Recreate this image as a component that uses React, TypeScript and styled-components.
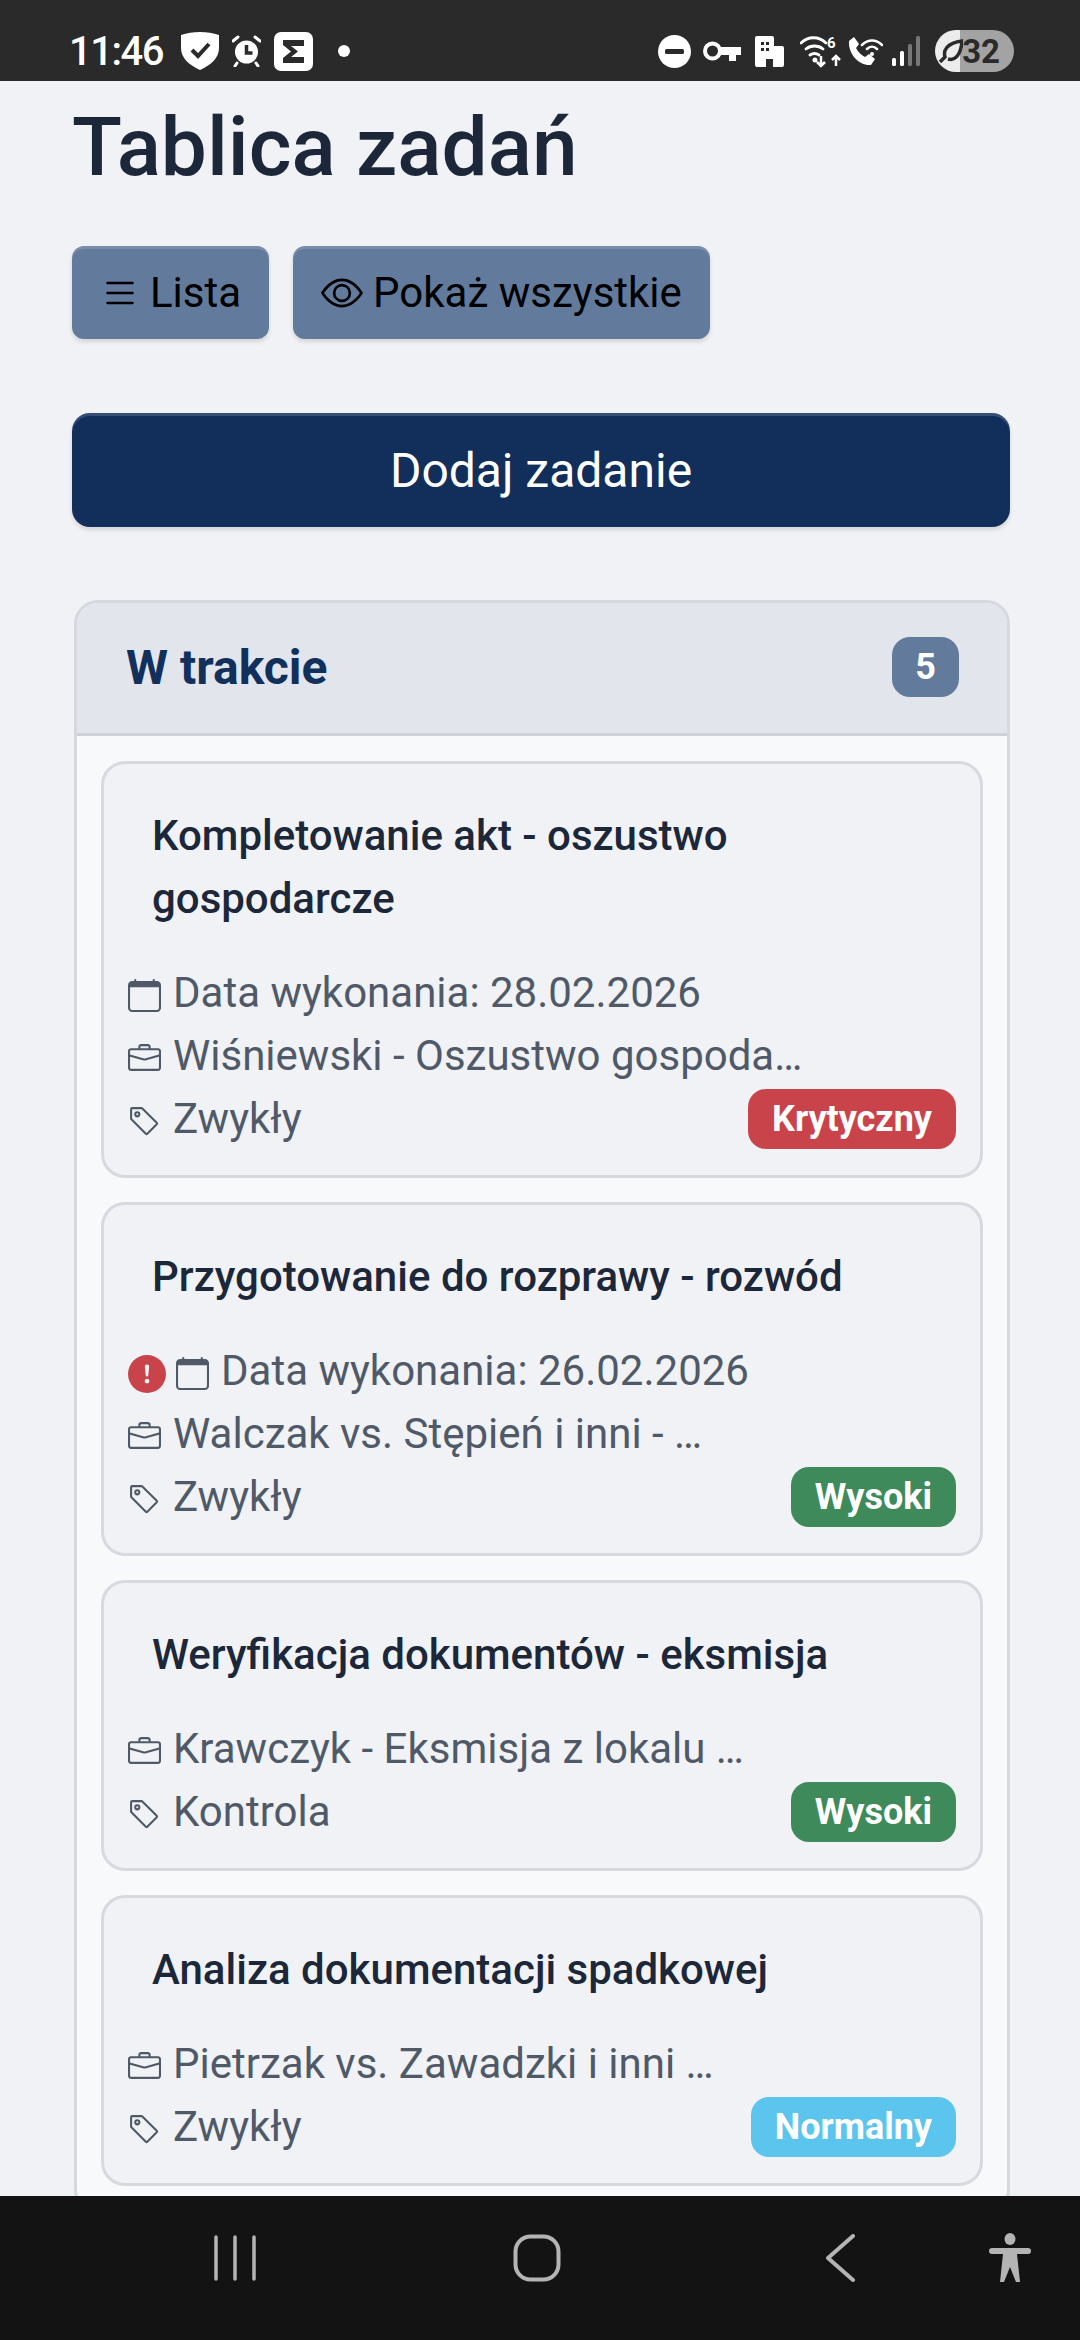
import styled, { createGlobalStyle } from "styled-components";
import {
  BsBriefcase,
  BsCalendar,
  BsExclamationCircleFill,
  BsEye,
  BsList,
  BsTag,
} from "react-icons/bs";

type Priority = "critical" | "high" | "normal";

type Task = {
  title: string[];
  date?: string;
  overdue?: boolean;
  matter: string;
  type: string;
  priority: Priority;
  label: string;
};

const tasks: Task[] = [
  {
    title: ["Kompletowanie akt - oszustwo", "gospodarcze"],
    date: "28.02.2026",
    matter: "Wiśniewski - Oszustwo gospoda…",
    type: "Zwykły",
    priority: "critical",
    label: "Krytyczny",
  },
  {
    title: ["Przygotowanie do rozprawy - rozwód"],
    date: "26.02.2026",
    overdue: true,
    matter: "Walczak vs. Stępień i inni - …",
    type: "Zwykły",
    priority: "high",
    label: "Wysoki",
  },
  {
    title: ["Weryfikacja dokumentów - eksmisja"],
    matter: "Krawczyk - Eksmisja z lokalu …",
    type: "Kontrola",
    priority: "high",
    label: "Wysoki",
  },
  {
    title: ["Analiza dokumentacji spadkowej"],
    matter: "Pietrzak vs. Zawadzki i inni …",
    type: "Zwykły",
    priority: "normal",
    label: "Normalny",
  },
];

const priorityColors: Record<Priority, string> = {
  critical: "#c9434b",
  high: "#3f8a5a",
  normal: "#5cc5ee",
};

export default function App() {
  return (
    <>
      <GlobalStyle />
      <Screen>
        <StatusBar>
          <StatusGroup>
            <Clock>11:46</Clock>
            <StatusIcon $gap={19} width="38" height="38" viewBox="0 0 38 38">
              <path d="M19 0c7 0 13 1 19 3v13c0 10-8 17-19 22C8 33 0 26 0 16V3c6-2 12-3 19-3z" fill="#fff" />
              <path d="M11 18l6 6 11-12" fill="none" stroke="#2a2a2a" strokeWidth="4" />
            </StatusIcon>
            <StatusIcon $gap={13} width="29" height="32" viewBox="0 0 29 32">
              <circle cx="14.5" cy="17" r="11.5" fill="#fff" />
              <path d="M14.5 10v8h6" fill="none" stroke="#2a2a2a" strokeWidth="3.5" />
              <path d="M1 6l5-4M28 6l-5-4M5 28l-2 3M24 28l2 3" stroke="#fff" strokeWidth="3" strokeLinecap="round" />
            </StatusIcon>
            <StatusIcon $gap={13} width="39" height="39" viewBox="0 0 39 39">
              <rect width="39" height="39" rx="7" fill="#fff" />
              <path d="M9 8h21v6H17l7 5.5-7 5.500h13v6H9v-5l8-6.500-8-6.500z" fill="#2a2a2a" />
            </StatusIcon>
            <StatusDot />
          </StatusGroup>
          <StatusGroup>
            <StatusIcon width="33" height="33" viewBox="0 0 33 33">
              <circle cx="16.500" cy="16.500" r="16.500" fill="#fff" />
              <rect x="7" y="14" width="19" height="5" rx="1.500" fill="#2a2a2a" />
            </StatusIcon>
            <StatusIcon $gap={12} width="38" height="21" viewBox="0 0 38 21">
              <circle cx="9.500" cy="10" r="7.500" fill="none" stroke="#fff" strokeWidth="4" />
              <path d="M17 6h21v8h-5v6h-7v-6h-9z" fill="#fff" />
            </StatusIcon>
            <StatusIcon $gap={14} width="29" height="31" viewBox="0 0 29 31">
              <path d="M2 0h15a2 2 0 0 1 2 2v8h8a2 2 0 0 1 2 2v17a2 2 0 0 1-2 2H18v-8h-7v8H2a2 2 0 0 1-2-2V2a2 2 0 0 1 2-2z" fill="#fff" />
              <path d="M6 6h3v3H6zM11 6h3v3h-3zM6 12h3v3H6zM11 12h3v3h-3z" fill="#2a2a2a" />
            </StatusIcon>
            <StatusIcon $gap={16} width="43" height="33" viewBox="0 0 43 33">
              <path d="M1 8c7-7 18-7 25 0M6 14c5-4 12-4 17 0M10 20c3-2 6-2 9 0" fill="none" stroke="#fff" strokeWidth="2.800" strokeLinecap="round" />
              <circle cx="15" cy="25" r="2.500" fill="#fff" />
              <path d="M21 21v10M17 27l4 4 4-4M36 31V21M32 25l4-4 4 4" fill="none" stroke="#fff" strokeWidth="2.500" />
              <text x="27" y="13" fill="#fff" fontFamily="Roboto, sans-serif" fontSize="15" fontWeight="700">6</text>
            </StatusIcon>
            <StatusIcon $gap={5} width="35" height="29" viewBox="0 0 35 29">
              <path d="M6 0l5 7-3 4c2 4 5 7 9 9l4-3 6 5-4 6C11 29 0 17 1 4z" fill="#fff" />
              <path d="M14 8c6-6 14-6 20 0M19 12c3-3 7-3 10 0" fill="none" stroke="#fff" strokeWidth="2.500" strokeLinecap="round" />
              <circle cx="24" cy="17" r="2" fill="#fff" />
            </StatusIcon>
            <StatusIcon $gap={9} width="28" height="30" viewBox="0 0 28 30">
              <rect x="0" y="22" width="4" height="8" rx="1.500" fill="#fff" />
              <rect x="8" y="15" width="4" height="15" rx="1.500" fill="#fff" />
              <rect x="16" y="8" width="4" height="22" rx="1.500" fill="#777" />
              <rect x="24" y="0" width="4" height="30" rx="1.500" fill="#777" />
            </StatusIcon>
            <Battery>
              <BatteryLeaf width="24" height="24" viewBox="0 0 24 24">
                <path d="M1 23c2-2 4-4 5-5-2-7 2-14 17-16-1 14-7 20-14 18" fill="none" stroke="#2a2a2a" strokeWidth="3.500" />
              </BatteryLeaf>
              <BatteryLevel>32</BatteryLevel>
            </Battery>
          </StatusGroup>
        </StatusBar>

        <Content>
          <PageTitle>Tablica zadań</PageTitle>
          <Toolbar>
            <ToolButton>
              <BsList size={40} />
              Lista
            </ToolButton>
            <ToolButton>
              <BsEye size={42} />
              Pokaż wszystkie
            </ToolButton>
          </Toolbar>
          <AddButton>Dodaj zadanie</AddButton>

          <Column>
            <ColumnHeader>
              <ColumnTitle>W trakcie</ColumnTitle>
              <CountBadge>5</CountBadge>
            </ColumnHeader>
            <ColumnBody>
              {tasks.map((task) => (
                <TaskCard key={task.title[0]}>
                  <TaskTitle>
                    {task.title.map((line) => (
                      <div key={line}>{line}</div>
                    ))}
                  </TaskTitle>
                  <Meta>
                    {task.date && (
                      <MetaRow>
                        {task.overdue && (
                          <OverdueIcon>
                            <BsExclamationCircleFill size={38} />
                          </OverdueIcon>
                        )}
                        <BsCalendar size={33} />
                        <MetaText>Data wykonania: {task.date}</MetaText>
                      </MetaRow>
                    )}
                    <MetaRow>
                      <BsBriefcase size={33} />
                      <MetaText>{task.matter}</MetaText>
                    </MetaRow>
                    <MetaRow>
                      <BsTag size={33} />
                      <MetaText>{task.type}</MetaText>
                      <PriorityBadge $priority={task.priority}>{task.label}</PriorityBadge>
                    </MetaRow>
                  </Meta>
                </TaskCard>
              ))}
            </ColumnBody>
          </Column>
        </Content>

        <NavBar>
          <NavIcon $gap={0} width="42" height="46" viewBox="0 0 42 46">
            <path d="M2 2v42M21 2v42M40 2v42" stroke="#b4b4b4" strokeWidth="3.500" strokeLinecap="round" />
          </NavIcon>
          <NavIcon $gap={257} width="48" height="48" viewBox="0 0 48 48">
            <rect x="2.500" y="2.500" width="43" height="43" rx="15" fill="none" stroke="#b4b4b4" strokeWidth="4" />
          </NavIcon>
          <NavIcon $gap={264} width="30" height="48" viewBox="0 0 30 48">
            <path d="M28 2L3 24l25 22" fill="none" stroke="#b4b4b4" strokeWidth="4" strokeLinecap="round" strokeLinejoin="round" />
          </NavIcon>
          <NavIcon $gap={134} width="42" height="50" viewBox="0 0 42 50">
            <ellipse cx="21" cy="6" rx="5.500" ry="6" fill="#b4b4b4" />
            <path d="M3 15h36a3 3 0 0 1 0 6H28l3 28h-4l-6-15-6 15h-4l3-28H3a3 3 0 0 1 0-6z" fill="#b4b4b4" />
          </NavIcon>
        </NavBar>
      </Screen>
    </>
  );
}

const GlobalStyle = createGlobalStyle`
  html, body {
    margin: 0;
    padding: 0;
    background: #f0f2f6;
  }

  * {
    box-sizing: border-box;
  }

  body {
    font-family: Roboto, "Liberation Sans", sans-serif;
  }
`;

const Screen = styled.div`
  position: relative;
  display: flex;
  flex-direction: column;
  width: 1080px;
  height: 2340px;
  overflow: hidden;
  background: #f0f2f6;
`;

const StatusBar = styled.div`
  flex: none;
  height: 81px;
  padding: 21px 66px 0 69px;
  display: flex;
  justify-content: space-between;
  align-items: center;
  background: #2a2a2a;
`;

const StatusGroup = styled.div`
  display: flex;
  align-items: center;
`;

const Clock = styled.span`
  width: 93px;
  font-size: 40px;
  font-weight: 500;
  letter-spacing: -1.5px;
  color: #fff;
`;

const StatusIcon = styled.svg<{ $gap?: number }>`
  flex: none;
  margin-left: ${(p) => p.$gap ?? 0}px;
`;

const StatusDot = styled.span`
  width: 12px;
  height: 12px;
  margin-left: 25px;
  border-radius: 50%;
  background: #fff;
`;

const Battery = styled.div`
  position: relative;
  width: 79px;
  height: 42px;
  margin-left: 15px;
  border-radius: 21px;
  overflow: hidden;
  display: flex;
  align-items: center;
  justify-content: flex-end;
  padding-right: 14px;
  background: linear-gradient(to right, #ececec 25px, #a3a3a3 25px);
`;

const BatteryLeaf = styled.svg`
  position: absolute;
  left: 4px;
  top: 9px;
`;

const BatteryLevel = styled.span`
  font-size: 33px;
  font-weight: 700;
  color: #2a2a2a;
`;

const Content = styled.main`
  flex: 1;
  min-height: 0;
  padding: 18px 70px 0 72px;
`;

const PageTitle = styled.h1`
  margin: 0;
  font-size: 82px;
  line-height: 96px;
  font-weight: 500;
  color: #1c2739;
`;

const Toolbar = styled.div`
  display: flex;
  gap: 24px;
  margin-top: 51px;
`;

const ToolButton = styled.button`
  height: 93px;
  padding: 0 28px;
  display: flex;
  align-items: center;
  gap: 10px;
  border: none;
  border-radius: 12px;
  font-family: inherit;
  font-size: 42px;
  color: #000;
  background: #627a9b;
  box-shadow: inset 0 3px 0 rgba(255, 255, 255, 0.15), 0 3px 4px rgba(0, 0, 0, 0.12);
`;

const AddButton = styled.button`
  display: block;
  width: 100%;
  height: 114px;
  margin-top: 74px;
  border: none;
  border-radius: 18px;
  font-family: inherit;
  font-size: 48px;
  color: #fff;
  background: #122f5b;
  box-shadow: inset 0 3px 0 rgba(255, 255, 255, 0.15), 0 3px 4px rgba(0, 0, 0, 0.12);
`;

const Column = styled.section`
  margin: 73px 0 0 2px;
  border: 3px solid #d5d9df;
  border-radius: 24px;
  overflow: hidden;
  background: #f8f9fb;
`;

const ColumnHeader = styled.div`
  height: 133px;
  padding: 0 48px 2px 49px;
  display: flex;
  align-items: center;
  justify-content: space-between;
  background: #e2e6ec;
  border-bottom: 3px solid #cdd2d9;
`;

const ColumnTitle = styled.h2`
  margin: 0;
  font-size: 48px;
  font-weight: 700;
  color: #12305c;
`;

const CountBadge = styled.span`
  width: 67px;
  height: 60px;
  display: flex;
  align-items: center;
  justify-content: center;
  border-radius: 18px;
  font-size: 36px;
  font-weight: 700;
  color: #fff;
  background: #627a9b;
`;

const ColumnBody = styled.div`
  display: flex;
  flex-direction: column;
  gap: 24px;
  padding: 25px 24px;
`;

const TaskCard = styled.article`
  padding: 40px 24px 25px;
  border: 3px solid #d6d9de;
  border-radius: 24px;
  background: #f0f2f6;
`;

const TaskTitle = styled.h3`
  margin: 0;
  padding-left: 24px;
  font-size: 42px;
  line-height: 63px;
  font-weight: 500;
  color: #1c2739;
`;

const Meta = styled.div`
  margin-top: 31px;
  display: flex;
  flex-direction: column;
`;

const MetaRow = styled.div`
  height: 63px;
  display: flex;
  align-items: center;
  color: #4f5967;

  svg {
    margin-top: 6px;
  }
`;

const MetaText = styled.span`
  margin-left: 12px;
  font-size: 42px;
  white-space: nowrap;
`;

const OverdueIcon = styled.span`
  display: flex;
  margin-right: 10px;
  color: #c9434b;
`;

const PriorityBadge = styled.span<{ $priority: Priority }>`
  margin-left: auto;
  height: 60px;
  padding: 0 24px;
  display: flex;
  align-items: center;
  border-radius: 18px;
  font-size: 36px;
  font-weight: 700;
  color: #fff;
  background: ${(p) => priorityColors[p.$priority]};
`;

const NavBar = styled.nav`
  position: absolute;
  left: 0;
  right: 0;
  bottom: 0;
  height: 144px;
  padding: 0 0 20px 214px;
  display: flex;
  align-items: center;
  background: #131313;
`;

const NavIcon = styled.svg<{ $gap: number }>`
  flex: none;
  margin-left: ${(p) => p.$gap}px;
`;
